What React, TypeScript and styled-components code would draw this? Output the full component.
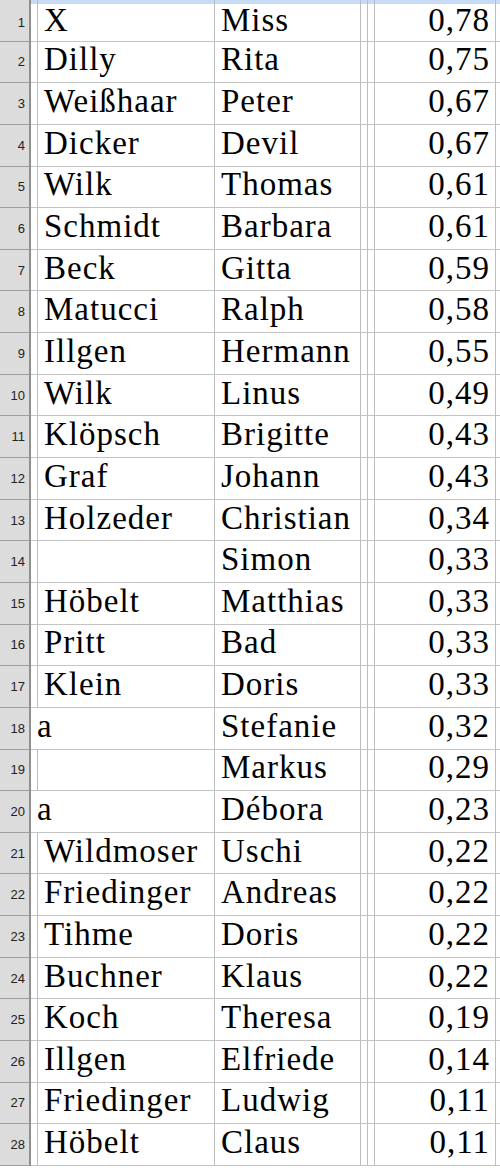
import { Fragment } from "react";
import styled, { createGlobalStyle } from "styled-components";

const GlobalStyle = createGlobalStyle`
    html, body {
        margin: 0;
        padding: 0;
        background: #ffffff;
    }
`;

type Row = [string, string, string, string];

// narrow col, surname, first name, value
const rows: Row[] = [
    ["", "X", "Miss", "0,78"],
    ["", "Dilly", "Rita", "0,75"],
    ["", "Weißhaar", "Peter", "0,67"],
    ["", "Dicker", "Devil", "0,67"],
    ["", "Wilk", "Thomas", "0,61"],
    ["", "Schmidt", "Barbara", "0,61"],
    ["", "Beck", "Gitta", "0,59"],
    ["", "Matucci", "Ralph", "0,58"],
    ["", "Illgen", "Hermann", "0,55"],
    ["", "Wilk", "Linus", "0,49"],
    ["", "Klöpsch", "Brigitte", "0,43"],
    ["", "Graf", "Johann", "0,43"],
    ["", "Holzeder", "Christian", "0,34"],
    ["", "", "Simon", "0,33"],
    ["", "Höbelt", "Matthias", "0,33"],
    ["", "Pritt", "Bad", "0,33"],
    ["", "Klein", "Doris", "0,33"],
    ["a", "", "Stefanie", "0,32"],
    ["", "", "Markus", "0,29"],
    ["a", "", "Débora", "0,23"],
    ["", "Wildmoser", "Uschi", "0,22"],
    ["", "Friedinger", "Andreas", "0,22"],
    ["", "Tihme", "Doris", "0,22"],
    ["", "Buchner", "Klaus", "0,22"],
    ["", "Koch", "Theresa", "0,19"],
    ["", "Illgen", "Elfriede", "0,14"],
    ["", "Friedinger", "Ludwig", "0,11"],
    ["", "Höbelt", "Claus", "0,11"],
];

const Sheet = styled.div`
    display: grid;
    grid-template-columns: 31px 7px 177px 146px 7px 7px 121px 4px;
    grid-template-rows: 4px 37.65px repeat(27, 41.65px);
    width: 500px;
    color: #000;
`;

const RowHead = styled.div<{ $top?: boolean }>`
    background: #dcdcdc;
    border-right: 2px solid #8f8f8f;
    border-bottom: ${(p) => (p.$top ? "none" : "1px solid #9d9d9d")};
    box-sizing: border-box;
    display: flex;
    align-items: center;
    justify-content: flex-end;
    padding-right: 4px;
    font-family: "Liberation Sans", Arial, sans-serif;
    font-size: 13px;
    color: #222;
`;

const TopCell = styled.div<{ $line?: boolean }>`
    background: #c7dbf6;
    border-right: ${(p) => (p.$line ? "1px solid #bdbdbd" : "none")};
`;

const Cell = styled.div<{ $right?: boolean; $open?: boolean; $line?: boolean }>`
    box-sizing: border-box;
    border-bottom: 1px solid #c4c4c4;
    border-right: ${(p) => (p.$open || !p.$line ? "none" : "1px solid #bdbdbd")};
    display: flex;
    align-items: center;
    justify-content: ${(p) => (p.$right ? "flex-end" : "flex-start")};
    padding: 0 ${(p) => (p.$right ? "5px" : "0")} 4px ${(p) => (p.$right ? "0" : "6px")};
    font-family: "Liberation Serif", "Times New Roman", serif;
    font-size: 33px;
    letter-spacing: 1px;
    white-space: nowrap;
    overflow: visible;
    position: relative;
    z-index: ${(p) => (p.$open ? 1 : 0)};
`;

export default function App() {
    return (
        <>
            <GlobalStyle />
            <Sheet>
                <RowHead $top />
                <TopCell $line />
                <TopCell $line />
                <TopCell $line />
                <TopCell $line />
                <TopCell $line />
                <TopCell $line />
                <TopCell />
                {rows.map(([pre, last, first, val], i) => (
                    <Fragment key={i}>
                        <RowHead>{i + 1}</RowHead>
                        <Cell $line $open={pre !== ""}>
                            {pre}
                        </Cell>
                        <Cell $line>{last}</Cell>
                        <Cell $line>{first}</Cell>
                        <Cell $line />
                        <Cell $line />
                        <Cell $line $right>
                            {val}
                        </Cell>
                        <Cell />
                    </Fragment>
                ))}
            </Sheet>
        </>
    );
}
